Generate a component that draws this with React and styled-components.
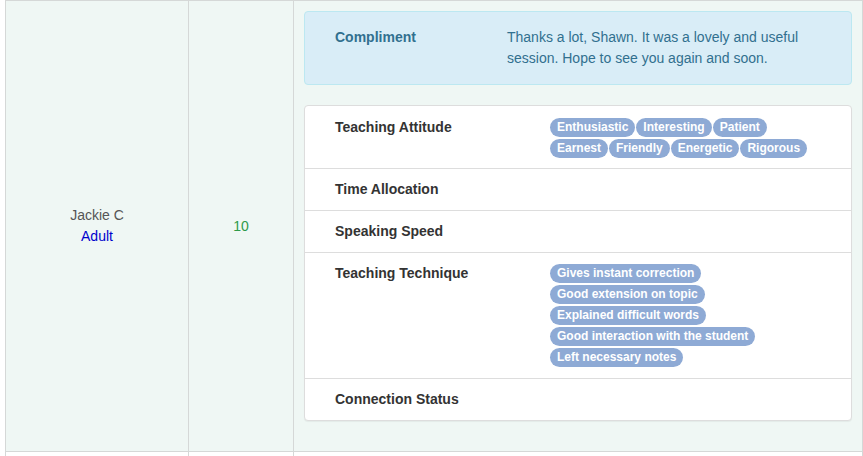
import React from 'react';
import styled, { createGlobalStyle } from 'styled-components';

const GlobalStyle = createGlobalStyle`
  html, body {
    margin: 0;
    padding: 0;
    background: #fff;
    font-family: "Liberation Sans", Arial, sans-serif;
    font-size: 14px;
    color: #333;
  }
`;

const Page = styled.div`
  padding-left: 5px;
  height: 456px;
  overflow: hidden;
`;

const Table = styled.table`
  width: 858px;
  border-collapse: collapse;
  table-layout: fixed;
`;

const Row = styled.tr`
  background: ${p => (p.$blank ? '#fff' : '#eff7f4')};
`;

const Cell = styled.td`
  border: 1px solid #d5d8d7;
  text-align: center;
  vertical-align: middle;
  padding: 0;
  line-height: 21px;
  height: ${p => (p.$blank ? '20px' : 'auto')};
`;

const DetailCell = styled.td`
  border: 1px solid #d5d8d7;
  padding: 10px 10px 30px 10px;
  vertical-align: top;
`;

const Name = styled.div`
  color: #555;
`;

const Level = styled.div`
  color: #0000cc;
`;

const Score = styled.span`
  color: #2e9a4a;
`;

const Alert = styled.div`
  display: grid;
  grid-template-columns: 172px 1fr;
  padding: 15px 30px;
  margin-bottom: 20px;
  background: #d9edf7;
  border: 1px solid #bce8f1;
  border-radius: 4px;
  color: #31708f;
  line-height: 21px;
`;

const AlertTitle = styled.div`
  font-weight: bold;
  line-height: 20px;
`;

const AlertText = styled.div`
  padding-right: 20px;
`;

const Panel = styled.div`
  background: #fff;
  border: 1px solid #ddd;
  border-radius: 4px;
  box-shadow: 0 1px 1px rgba(0, 0, 0, 0.05);
`;

const PanelRow = styled.div`
  display: grid;
  grid-template-columns: 215px 1fr;
  padding: ${p => (p.$first ? '12px 30px 10px' : '11px 30px')};
  min-height: 19px;
  border-top: ${p => (p.$first ? 'none' : '1px solid #ddd')};
`;

const Label = styled.div`
  font-weight: bold;
  color: #333;
  line-height: 19px;
`;

const Tags = styled.div`
  display: flex;
  flex-wrap: wrap;
  flex-direction: ${p => (p.$stacked ? 'column' : 'row')};
  align-items: flex-start;
  gap: 2px 1px;
  max-width: ${p => (p.$stacked ? 'none' : '260px')};
`;

const Tag = styled.span`
  display: inline-block;
  padding: 0 7px;
  height: 19px;
  line-height: 19px;
  border-radius: 10px;
  background: #8eaad5;
  color: #fff;
  font-size: 12px;
  font-weight: bold;
  white-space: nowrap;
`;

const attitude = ['Enthusiastic', 'Interesting', 'Patient', 'Earnest', 'Friendly', 'Energetic', 'Rigorous'];
const technique = [
  'Gives instant correction',
  'Good extension on topic',
  'Explained difficult words',
  'Good interaction with the student',
  'Left necessary notes'
];

const items = [
  { label: 'Teaching Attitude', tags: attitude },
  { label: 'Time Allocation' },
  { label: 'Speaking Speed' },
  { label: 'Teaching Technique', tags: technique, stacked: true },
  { label: 'Connection Status' }
];

export default function App() {
  return (
    <Page>
      <GlobalStyle />
      <Table>
        <colgroup>
          <col style={{ width: 183 }} />
          <col style={{ width: 105 }} />
          <col />
        </colgroup>
        <tbody>
          <Row>
            <Cell>
              <Name>Jackie C</Name>
              <Level>Adult</Level>
            </Cell>
            <Cell>
              <Score>10</Score>
            </Cell>
            <DetailCell>
              <Alert>
                <AlertTitle>Compliment</AlertTitle>
                <AlertText>Thanks a lot, Shawn. It was a lovely and useful session. Hope to see you again and soon.</AlertText>
              </Alert>
              <Panel>
                {items.map((item, i) => (
                  <PanelRow key={item.label} $first={i === 0}>
                    <Label>{item.label}</Label>
                    {item.tags ? (
                      <Tags $stacked={item.stacked}>
                        {item.tags.map(t => <Tag key={t}>{t}</Tag>)}
                      </Tags>
                    ) : <div />}
                  </PanelRow>
                ))}
              </Panel>
            </DetailCell>
          </Row>
          <Row $blank>
            <Cell $blank />
            <Cell $blank />
            <Cell $blank />
          </Row>
        </tbody>
      </Table>
    </Page>
  );
}
